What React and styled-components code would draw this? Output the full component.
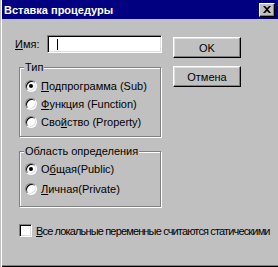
import React from 'react';
import styled, { createGlobalStyle } from 'styled-components';

const Global = createGlobalStyle`
  html, body {
    margin: 0;
    padding: 0;
    background: #c0c0c0;
  }
  body {
    font-family: "Liberation Sans", Arial, sans-serif;
  }
`;

const Window = styled.div`
  width: 278px;
  height: 267px;
  box-sizing: border-box;
  background: #c0c0c0;
  box-shadow: inset 1px 0 0 #c0c0c0, inset 2px 0 0 #ffffff,
    inset 0 -1px 0 #000000, inset 0 -2px 0 #808080;
  padding-left: 2px;
  overflow: hidden;
`;

const TitleBar = styled.div`
  height: 19px;
  background: #000080;
  display: flex;
  align-items: center;
  justify-content: space-between;
  padding: 0 3px 0 2px;
`;

const Title = styled.span`
  color: #fff;
  font-weight: bold;
  font-size: 11px;
  letter-spacing: 0;
`;

const CloseButton = styled.div`
  width: 16px;
  height: 14px;
  box-sizing: border-box;
  background: #c0c0c0;
  border-top: 1px solid #fff;
  border-left: 1px solid #fff;
  border-right: 1px solid #000;
  border-bottom: 1px solid #000;
  box-shadow: inset -1px -1px 0 #808080;
  display: flex;
  align-items: center;
  justify-content: center;
`;

const Body = styled.div`
  padding: 16px 0 0 13px;
  font-size: 11px;
  color: #000;
`;

const Columns = styled.div`
  display: grid;
  grid-template-columns: 147px 68px;
  column-gap: 11px;
`;

const Left = styled.div`
  display: flex;
  flex-direction: column;
`;

const NameRow = styled.div`
  display: flex;
  align-items: center;
  height: 18px;
`;

const Label = styled.span`
  width: 32px;
`;

const Input = styled.div`
  width: 115px;
  height: 18px;
  box-sizing: border-box;
  background: #fff;
  border-top: 1px solid #808080;
  border-left: 1px solid #808080;
  border-right: 1px solid #fff;
  border-bottom: 1px solid #fff;
  box-shadow: inset 1px 1px 0 #000, inset -1px -1px 0 #dfdfdf;
  display: flex;
  align-items: center;
  padding-left: 9px;
`;

const Caret = styled.span`
  width: 1px;
  height: 11px;
  background: #000;
`;

const Group = styled.fieldset`
  margin: ${(p) => p.$top}px 0 0 4px;
  width: 142px;
  box-sizing: border-box;
  padding: 0;
  border: 1px solid #808080;
  box-shadow: inset 1px 1px 0 #fff, 1px 1px 0 #fff;
`;

const Legend = styled.legend`
  margin-left: 4px;
  padding: 0 1px;
  line-height: 13px;
  background: #c0c0c0;
`;

const GroupBody = styled.div`
  display: flex;
  flex-direction: column;
  gap: ${(p) => p.$gap}px;
  padding: ${(p) => p.$pad};
`;

const Option = styled.div`
  display: flex;
  align-items: center;
  height: 18px;
  gap: 4px;
  white-space: nowrap;
`;

const Radio = styled.span`
  position: relative;
  flex-shrink: 0;
  width: 12px;
  height: 12px;
  box-sizing: border-box;
  border-radius: 50%;
  background: #fff;
  border: 1px solid;
  border-color: #808080 #fff #fff #808080;
  box-shadow: inset 1px 1px 0 #000, inset -1px -1px 0 #dfdfdf;
  &::after {
    content: '';
    display: ${(p) => (p.$on ? 'block' : 'none')};
    position: absolute;
    left: 3px;
    top: 3px;
    width: 4px;
    height: 4px;
    border-radius: 50%;
    background: #000;
  }
`;

const Key = styled.span`
  text-decoration: underline;
`;

const Buttons = styled.div`
  display: flex;
  flex-direction: column;
  gap: 8px;
  padding-top: 2px;
`;

const Button = styled.div`
  height: 21px;
  box-sizing: border-box;
  border-top: 1px solid #fff;
  border-left: 1px solid #fff;
  border-right: 1px solid #000;
  border-bottom: 1px solid #000;
  box-shadow: inset -1px -1px 0 #808080, inset 1px 1px 0 #dfdfdf;
  display: flex;
  align-items: center;
  justify-content: center;
  font-size: 11px;
`;

const CheckRow = styled.div`
  display: flex;
  align-items: center;
  gap: 4px;
  margin: 17px 0 0 4px;
  height: 13px;
  white-space: nowrap;
  letter-spacing: -0.85px;
`;

const Check = styled.span`
  flex-shrink: 0;
  width: 13px;
  height: 13px;
  box-sizing: border-box;
  background: #fff;
  border: 1px solid;
  border-color: #808080 #fff #fff #808080;
  box-shadow: inset 1px 1px 0 #000, inset -1px -1px 0 #dfdfdf;
`;

export default function App() {
  return (
    <>
      <Global />
      <Window>
        <TitleBar>
          <Title>Вставка процедуры</Title>
          <CloseButton>
            <svg width="8" height="7" viewBox="0 0 8 7">
              <path d="M0 0h2l2 2 2-2h2L5 3.5 8 7H6L4 5 2 7H0l3-3.5z" fill="#000" />
            </svg>
          </CloseButton>
        </TitleBar>
        <Body>
          <Columns>
            <Left>
              <NameRow>
                <Label><Key>И</Key>мя:</Label>
                <Input><Caret /></Input>
              </NameRow>
              <Group $top={8}>
                <Legend>Тип</Legend>
                <GroupBody $gap={0} $pad="3px 0 5px 5px">
                  <Option><Radio $on /><span><Key>П</Key>одпрограмма (Sub)</span></Option>
                  <Option><Radio /><span><Key>Ф</Key>ункция (Function)</span></Option>
                  <Option><Radio /><span>Сво<Key>й</Key>ство (Property)</span></Option>
                </GroupBody>
              </Group>
              <Group $top={8}>
                <Legend>Область определения</Legend>
                <GroupBody $gap={2} $pad="2px 0 8px 5px">
                  <Option><Radio $on /><span>О<Key>б</Key>щая(Public)</span></Option>
                  <Option><Radio /><span><Key>Л</Key>ичная(Private)</span></Option>
                </GroupBody>
              </Group>
            </Left>
            <Buttons>
              <Button>OK</Button>
              <Button>Отмена</Button>
            </Buttons>
          </Columns>
          <CheckRow>
            <Check />
            <span><Key>В</Key>се локальные переменные считаются статическими</span>
          </CheckRow>
        </Body>
      </Window>
    </>
  );
}
